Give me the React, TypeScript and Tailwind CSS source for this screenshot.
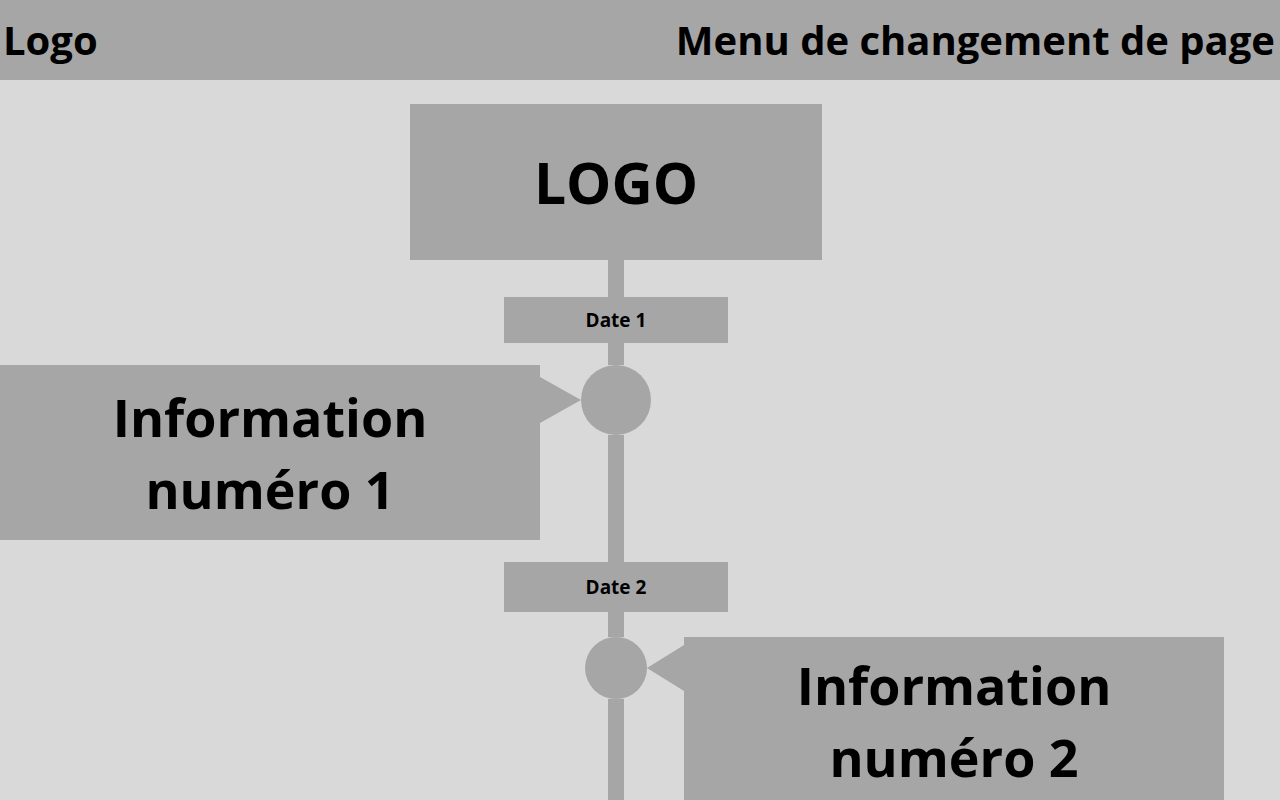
import React from "react";

const font = { fontFamily: '"Open Sans", "Liberation Sans", sans-serif' };

function Seg({ h }: { h: string }) {
  return (
    <div className="w-[1232px] flex justify-center">
      <div className={`w-4 bg-[#a6a6a6] ${h}`} />
    </div>
  );
}

export default function App() {
  return (
    <div className="w-full h-screen overflow-hidden bg-[#d9d9d9] text-black font-bold" style={font}>
      <header className="h-20 bg-[#a6a6a6] flex items-center justify-between pl-[3px] pr-[5px]">
        <span className="text-[40px] leading-none">Logo</span>
        <span className="text-[40px] leading-none">Menu de changement de page</span>
      </header>

      <div className="flex flex-col pt-6">
        <div className="w-[1232px] flex justify-center">
          <div className="w-[412px] h-[156px] bg-[#a6a6a6] flex items-center justify-center">
            <span className="text-[57px] leading-none">LOGO</span>
          </div>
        </div>
        <Seg h="h-[37px]" />
        <div className="w-[1232px] flex justify-center">
          <div className="w-[224px] h-[46px] bg-[#a6a6a6] flex items-center justify-center text-[19px]">
            Date 1
          </div>
        </div>
        <Seg h="h-[22px]" />

        {/* Row 1 */}
        <div className="flex w-[1280px]">
          <div className="w-[540px] h-[175px] bg-[#a6a6a6] flex flex-col items-center justify-center text-[52px] leading-[72px] text-center">
            <span>Information</span>
            <span>numéro 1</span>
          </div>
          <div className="w-[41px] pt-[12px]">
            <svg width="41" height="46" viewBox="0 0 41 46">
              <polygon points="0,0 41,23 0,46" fill="#a6a6a6" />
            </svg>
          </div>
          <div className="w-[70px] flex flex-col items-center">
            <div className="w-[70px] h-[70px] rounded-full bg-[#a6a6a6]" />
            <div className="w-4 flex-1 bg-[#a6a6a6]" />
          </div>
        </div>

        <Seg h="h-[22px]" />
        <div className="w-[1232px] flex justify-center">
          <div className="w-[224px] h-[50px] bg-[#a6a6a6] flex items-center justify-center text-[19px]">
            Date 2
          </div>
        </div>
        <Seg h="h-[25px]" />

        {/* Row 2 */}
        <div className="flex w-[1280px]">
          <div className="w-[585px]" />
          <div className="w-[62px] flex flex-col items-center">
            <div className="w-[62px] h-[62px] rounded-full bg-[#a6a6a6]" />
            <div className="w-4 flex-1 bg-[#a6a6a6]" />
          </div>
          <div className="w-[37px] pt-[8px]">
            <svg width="37" height="46" viewBox="0 0 37 46">
              <polygon points="37,0 0,23 37,46" fill="#a6a6a6" />
            </svg>
          </div>
          <div className="w-[540px] h-[175px] bg-[#a6a6a6] flex flex-col items-center justify-start pt-[12px] text-[52px] leading-[72px] text-center">
            <span>Information</span>
            <span>numéro 2</span>
          </div>
        </div>
      </div>
    </div>
  );
}
